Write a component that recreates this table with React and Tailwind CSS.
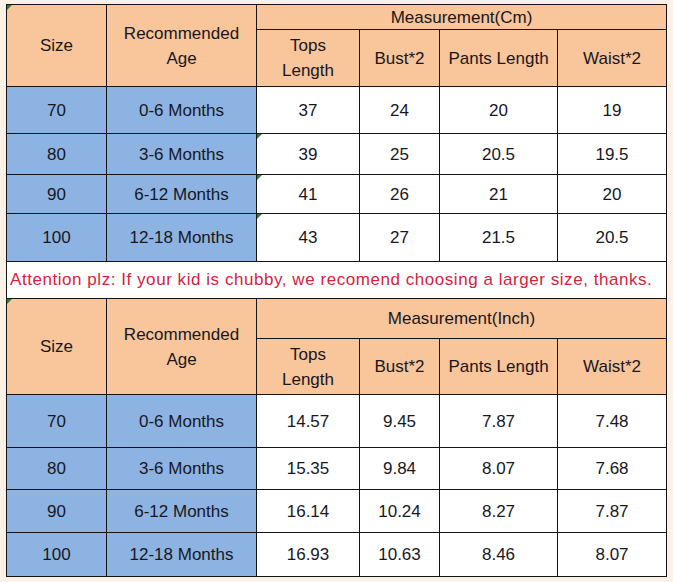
import React from "react";

const font = { fontFamily: '"Liberation Sans", Arial, sans-serif' };

function Tri() {
  return (
    <span className="absolute left-0 top-0 w-0 h-0 border-t-[5px] border-r-[5px] border-t-[#2f7d32] border-r-transparent" />
  );
}

function Cell({ children, className = "", tri = false }) {
  return (
    <div className={"relative flex items-center justify-center text-center leading-[25px] " + className}>
      {tri && <Tri />}
      {children}
    </div>
  );
}

function Table({ unit, rows, tris }) {
  const peach = "bg-[#f9c59b]";
  const blue = "bg-[#8db3e2]";
  return (
    <>
      <Cell className={peach + " row-span-2"} tri={tris.head}>Size</Cell>
      <Cell className={peach + " row-span-2"}>
        <span>Recommended<br />Age</span>
      </Cell>
      <Cell className={peach + " col-span-4"}>{"Measurement(" + unit + ")"}</Cell>
      <Cell className={peach}>
        <span>Tops<br />Length</span>
      </Cell>
      <Cell className={peach}>Bust*2</Cell>
      <Cell className={peach}>Pants Length</Cell>
      <Cell className={peach}>Waist*2</Cell>
      {rows.map((r, i) => (
        <React.Fragment key={i}>
          <Cell className={blue}>{r[0]}</Cell>
          <Cell className={blue}>{r[1]}</Cell>
          <Cell className="bg-white" tri={tris.rows && i > 0}>{r[2]}</Cell>
          <Cell className="bg-white">{r[3]}</Cell>
          <Cell className="bg-white">{r[4]}</Cell>
          <Cell className="bg-white">{r[5]}</Cell>
        </React.Fragment>
      ))}
    </>
  );
}

export default function App() {
  const cm = [
    ["70", "0-6 Months", "37", "24", "20", "19"],
    ["80", "3-6 Months", "39", "25", "20.5", "19.5"],
    ["90", "6-12 Months", "41", "26", "21", "20"],
    ["100", "12-18 Months", "43", "27", "21.5", "20.5"],
  ];
  const inch = [
    ["70", "0-6 Months", "14.57", "9.45", "7.87", "7.48"],
    ["80", "3-6 Months", "15.35", "9.84", "8.07", "7.68"],
    ["90", "6-12 Months", "16.14", "10.24", "8.27", "7.87"],
    ["100", "12-18 Months", "16.93", "10.63", "8.46", "8.07"],
  ];
  return (
    <div className="w-[673px] h-[582px] bg-[#fcf1e6] pt-[4px] pl-[6px] text-[#17171f] text-[17px]" style={font}>
      <div className="grid w-[661px] gap-px bg-[#141414] p-px grid-cols-[99px_149px_102px_79px_117px_108px] grid-rows-[24px_56px_46px_40px_38px_47px_36px_39px_55px_52px_41px_42px_43px]">
        <Table unit="Cm" rows={cm} tris={{ head: true, rows: true }} />
        <div className="relative col-span-6 bg-white flex items-center pl-[3px] text-[#d3243d] whitespace-nowrap tracking-[0.55px]">
          Attention plz: If your kid is chubby, we recomend choosing a larger size, thanks.
        </div>
        <Table unit="Inch" rows={inch} tris={{ head: true, rows: false }} />
      </div>
    </div>
  );
}
